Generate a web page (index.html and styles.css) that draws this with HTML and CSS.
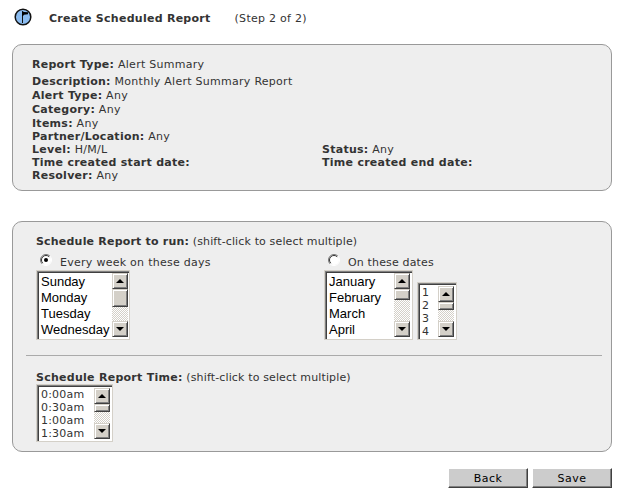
FILE: index.html
```
<!DOCTYPE html>
<html lang="en">
<head>
<meta charset="utf-8">
<title>Create Scheduled Report</title>
<link rel="stylesheet" href="styles.css">
</head>
<body>
<header class="header">
  <svg class="logo" width="18" height="18" viewBox="0 0 18 18"><circle cx="9" cy="9" r="7.8" fill="#8bbcf0" stroke="#111" stroke-width="1.5"/><path d="M8.5 3.5V15" stroke="#111" stroke-width="1"/><path d="M8 3l2 1 4 .3v2L10 6.8 9 8H8z" fill="#000"/></svg>
  <h1 class="title">Create Scheduled Report</h1>
  <span class="step">(Step 2 of 2)</span>
</header>
<main>
  <section class="panel summary">
    <div class="row first"><b>Report Type:</b> Alert Summary</div>
    <div class="row"><b>Description:</b> Monthly Alert Summary Report</div>
    <div class="row"><b>Alert Type:</b> Any</div>
    <div class="row"><b>Category:</b> Any</div>
    <div class="row tight"><b>Items:</b> Any</div>
    <div class="row tight"><b>Partner/Location:</b> Any</div>
    <div class="row tight pair"><div><b>Level:</b> H/M/L</div><div><b>Status:</b> Any</div></div>
    <div class="row tight pair"><div><b>Time created start date:</b></div><div><b>Time created end date:</b></div></div>
    <div class="row tight"><b>Resolver:</b> Any</div>
  </section>
  <section class="panel schedule">
    <div class="legend"><b>Schedule Report to run:</b> (shift-click to select multiple)</div>
    <div class="choices">
      <div class="choice">
        <label class="option"><svg class="radio" width="12" height="12" viewBox="0 0 12 12"><circle cx="6" cy="6" r="5" fill="#fff"/><path d="M2.1 9.9A5.5 5.5 0 0 1 9.9 2.1" fill="none" stroke="#777"/><path d="M2.8 9.2A4.5 4.5 0 0 1 9.2 2.8" fill="none" stroke="#333"/><path d="M9.9 2.1A5.5 5.5 0 0 1 2.1 9.9" fill="none" stroke="#fff"/><circle cx="6" cy="6" r="2" fill="#000"/></svg>Every week on these days</label>
        <div class="list days">
          <ul class="items"><li>Sunday</li><li>Monday</li><li>Tuesday</li><li>Wednesday</li></ul>
          <div class="bar"><i class="btn up"></i><i class="thumb tall"></i><i class="btn down"></i></div>
        </div>
      </div>
      <div class="choice">
        <label class="option narrow"><svg class="radio" width="12" height="12" viewBox="0 0 12 12"><circle cx="6" cy="6" r="5" fill="#fff"/><path d="M2.1 9.9A5.5 5.5 0 0 1 9.9 2.1" fill="none" stroke="#777"/><path d="M2.8 9.2A4.5 4.5 0 0 1 9.2 2.8" fill="none" stroke="#333"/><path d="M9.9 2.1A5.5 5.5 0 0 1 2.1 9.9" fill="none" stroke="#fff"/></svg>On these dates</label>
        <div class="lists">
          <div class="list months">
            <ul class="items"><li>January</li><li>February</li><li>March</li><li>April</li></ul>
            <div class="bar"><i class="btn up"></i><i class="thumb mid"></i><i class="btn down"></i></div>
          </div>
          <div class="list small dates">
            <ul class="items"><li>1</li><li>2</li><li>3</li><li>4</li></ul>
            <div class="bar"><i class="btn up"></i><i class="thumb"></i><i class="btn down"></i></div>
          </div>
        </div>
      </div>
    </div>
    <hr class="rule">
    <div class="legend"><b class="time-label">Schedule Report Time:</b> (shift-click to select multiple)</div>
    <div class="list small times">
      <ul class="items"><li>0:00am</li><li>0:30am</li><li>1:00am</li><li>1:30am</li></ul>
      <div class="bar"><i class="btn up"></i><i class="thumb"></i><i class="btn down"></i></div>
    </div>
  </section>
</main>
<footer class="actions"><button class="action">Back</button><button class="action">Save</button></footer>
</body>
</html>
```
FILE: styles.css
```
* { box-sizing: border-box; }
body {
  margin: 0;
  width: 630px;
  height: 502px;
  overflow: hidden;
  background: #fff;
  color: #333;
  font: 11px/14px "DejaVu Sans", Verdana, sans-serif;
  letter-spacing: .27px;
}
.header { display: flex; height: 44px; padding: 8px 0 0 14px; }
.logo { margin-right: 17px; }
.title { margin: 4px 24px 0 0; font-size: 11px; line-height: 14px; }
.step { margin-top: 4px; }
.panel {
  width: 600px;
  margin-left: 12px;
  background: #eee;
  border: 1px solid #999;
  border-radius: 10px;
}
.summary { height: 147px; padding: 13px 19px 0; }
.row { height: 14px; }
.first { margin-bottom: 3px; }
.tight { height: 13px; line-height: 13px; }
.pair { display: grid; grid-template-columns: 290px 1fr; }
.schedule { height: 231px; margin-top: 30px; padding: 13px 9px 0 13px; }
.legend { height: 14px; margin-left: 10px; letter-spacing: .14px; }
.legend b { letter-spacing: .2px; }
.legend .time-label { letter-spacing: .27px; }
.choices { display: grid; grid-template-columns: 288px 1fr; margin-left: 10px; }
.option { display: flex; height: 21px; padding-top: 7px; }
.narrow { letter-spacing: .15px; }
.radio { flex: none; margin: -2px 8px 0 4px; }
.lists { display: flex; align-items: flex-end; gap: 4px; }
.list {
  display: flex;
  justify-content: space-between;
  background: #fff;
  border: 1px solid #d4d0c8;
  padding: 2px 2px 2px 3px;
  box-shadow: inset 1px 1px #808080, inset 2px 2px #404040, inset -1px -1px #fff;
}
.days { width: 94px; height: 70px; padding-right: 1px; }
.months { width: 89px; height: 70px; }
.small { padding-top: 3px; }
.dates { width: 40px; height: 58px; }
.times { width: 77px; height: 58px; margin: -1px 0 0 10px; }
.items {
  width: 0;
  margin: 0;
  padding: 1px 0 0 1px;
  list-style: none;
  white-space: nowrap;
  color: #000;
  font: 13px/16px "Liberation Sans", Arial, sans-serif;
  letter-spacing: 0;
}
.small .items {
  padding-top: 0;
  color: #333;
  font: 11px/13px "DejaVu Sans", Verdana, sans-serif;
  letter-spacing: .2px;
}
.bar {
  display: flex;
  flex-direction: column;
  width: 16px;
  background: repeating-conic-gradient(#fff 0 25%, #d4d0c8 0 50%) 0 0 / 2px 2px;
}
.btn, .thumb {
  flex: none;
  height: 16px;
  background: #d4d0c8;
  border: 1px solid #d4d0c8;
  border-right-color: #404040;
  border-bottom-color: #404040;
  box-shadow: inset 1px 1px #fff, inset -1px -1px #808080;
}
.btn { display: grid; place-items: center; }
.btn::before { content: ""; border: 4px solid transparent; border-width: 0 4px 4px; border-bottom-color: #000; }
.down { margin-top: auto; }
.down::before { border-width: 4px 4px 0; border-top-color: #000; }
.thumb { height: 8px; }
.mid { height: 11px; }
.tall { height: 18px; }
.rule { height: 1px; margin: 15px 0; border: 0; background: #aaa; }
.actions { display: flex; gap: 4px; padding: 16px 0 0 448px; }
.action {
  width: 80px;
  height: 20px;
  padding: 1px 0 0;
  border: 1px solid #fff;
  border-right-color: #404040;
  border-bottom-color: #404040;
  background: #ccc;
  box-shadow: inset -1px -1px #808080;
  color: #000;
  font: 11px/14px "DejaVu Sans", Verdana, sans-serif;
  letter-spacing: .5px;
}
```
